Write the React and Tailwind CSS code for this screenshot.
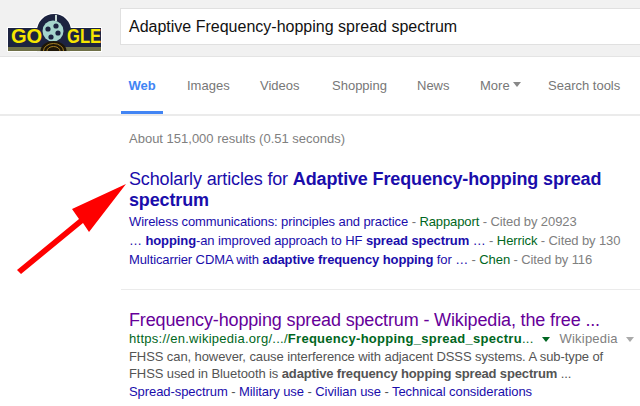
const tabs = [
  { label: 'Images', w: 'w-[73px]' },
  { label: 'Videos', w: 'w-[72px]' },
  { label: 'Shopping', w: 'w-[85px]' },
  { label: 'News', w: 'w-[63px]' },
];

function Logo() {
  return (
    <svg width="96" height="40" viewBox="0 0 96 40" className="shrink-0">
      <circle cx="47" cy="18" r="18" fill="#fff" />
      <rect x="0" y="14" width="95" height="25" fill="#fff" />
      <circle cx="47" cy="18" r="17" fill="#1c2340" />
      <rect x="1" y="15" width="93" height="20" fill="#1c2340" />
      <rect x="1" y="34" width="93" height="4" fill="#6f7048" />
      <circle cx="46" cy="18" r="10.5" fill="#a5d5cc" />
      <circle cx="41" cy="16" r="2.6" fill="#1c2340" />
      <circle cx="49" cy="13" r="2.6" fill="#1c2340" />
      <circle cx="51" cy="20" r="2.6" fill="#1c2340" />
      <circle cx="44" cy="24" r="2.6" fill="#1c2340" />
      <rect x="48" y="2" width="2" height="6" fill="#c5d8d4" />
      <ellipse cx="46.5" cy="38" rx="13" ry="10" fill="#1d1607" />
      <ellipse cx="46.5" cy="38" rx="10" ry="7.5" fill="none" stroke="#a67f22" strokeWidth="1" />
      <ellipse cx="46.5" cy="38" rx="6.5" ry="4.5" fill="none" stroke="#a67f22" strokeWidth="1" />
      <rect x="30" y="38" width="33" height="2" fill="#f1f1f1" />
      <text transform="translate(4 30) scale(1.03 1)" fill="#f6e600" fontFamily="Liberation Sans, sans-serif" fontWeight="700" fontSize="19.5">GO</text>
      <text transform="translate(60 30) scale(0.85 1)" fill="#f6e600" fontFamily="Liberation Sans, sans-serif" fontWeight="700" fontSize="19.5">GLE</text>
    </svg>
  );
}

function Caret({ color }) {
  return <span className={`inline-block w-0 h-0 border-x-[4px] border-x-transparent border-t-[5px] ${color}`} />;
}

export default function App() {
  return (
    <div className="relative w-[640px] h-[406px] overflow-hidden bg-white font-['Liberation_Sans',Arial,sans-serif]">
      <header className="h-[57px] bg-[#f1f1f1] border-b border-[#e4e4e4] flex items-start">
        <div className="pl-[7px] pt-[13px] w-[120px]">
          <Logo />
        </div>
        <div className="mt-[8px] flex-1 h-[37px] bg-white border-l border-t border-b border-[#e0e0e0] pl-[8px] flex items-center text-[16px] text-[#111]">
          Adaptive Frequency-hopping spread spectrum
        </div>
      </header>

      <nav className="h-[59px] border-b-2 border-[#ebebeb] flex pl-[121px] text-[13px] text-[#777]">
        <div className="w-[42px] h-[57px] border-b-[3px] border-[#4285f4] text-center pt-[19px] font-bold text-[#4285f4]">Web</div>
        <div className="flex pl-[24px] pt-[19px]">
          {tabs.map((t) => (
            <div key={t.label} className={t.w}>{t.label}</div>
          ))}
          <div className="w-[68px] flex items-start gap-[3px]">
            More <span className="mt-[6px] flex"><Caret color="border-t-[#888]" /></span>
          </div>
          <div>Search tools</div>
        </div>
      </nav>

      <main className="pl-[129px]">
        <div className="pt-[15px] text-[13px] leading-[16px] text-[#808080]">About 151,000 results (0.51 seconds)</div>

        <section className="mt-[21px] w-[490px] h-[121px] text-[#1a0dab]">
          <div className="text-[18px] leading-[21px] pt-[1px] tracking-[-0.14px]">
            <div>Scholarly articles for <b>Adaptive Frequency-hopping spread</b></div>
            <div><b>spectrum</b></div>
          </div>
          <div className="mt-[1px] text-[13px] leading-[19px] whitespace-nowrap tracking-[-0.1px]">
            <div>
              Wireless communications: principles and practice <span className="text-[#777]">- </span>
              <span className="text-[#006621]">Rappaport</span>
              <span className="text-[#808080]"> - Cited by 20923</span>
            </div>
            <div>
              … <b>hopping</b>-an improved approach to HF <b>spread spectrum</b> … <span className="text-[#777]">- </span>
              <span className="text-[#006621]">Herrick</span>
              <span className="text-[#808080]"> - Cited by 130</span>
            </div>
            <div>
              Multicarrier CDMA with <b>adaptive frequency hopping</b> for … <span className="text-[#777]">- </span>
              <span className="text-[#006621]">Chen</span>
              <span className="text-[#808080]"> - Cited by 116</span>
            </div>
          </div>
        </section>
      </main>

      <div className="ml-[121px] w-[519px] border-t border-[#ebebeb]" />

      <section className="pl-[129px] pt-[20px] whitespace-nowrap">
        <div className="text-[18px] leading-[21px] text-[#609] tracking-[-0.14px]">Frequency-hopping spread spectrum - Wikipedia, the free ...</div>
        <div className="flex items-center text-[13px] leading-[16px] text-[#006621]">
          <span className="tracking-[0.27px]">https://en.wikipedia.org/.../<b>Frequency-hopping_spread_spectru</b>...</span>
          <span className="ml-[8px] flex"><Caret color="border-t-[#006621]" /></span>
          <span className="ml-[10px] text-[#808080] tracking-[0.2px]">Wikipedia</span>
          <span className="ml-[8px] flex"><Caret color="border-t-[#aaa]" /></span>
        </div>
        <div className="mt-[1px] text-[13px] leading-[17px] text-[#545454]">
          <div className="tracking-[-0.09px]">FHSS can, however, cause interference with adjacent DSSS systems. A sub-type of</div>
          <div className="tracking-[-0.1px]">FHSS used in Bluetooth is <b className="tracking-[-0.15px]">adaptive frequency hopping spread spectrum</b> ...</div>
        </div>
        <div className="mt-[1px] text-[13px] leading-[17px] text-[#1a0dab] tracking-[-0.07px]">
          Spread-spectrum <span className="text-[#545454]">-</span> Military use <span className="text-[#545454]">-</span> Civilian use <span className="text-[#545454]">-</span> Technical considerations
        </div>
      </section>

      {/* red annotation arrow over the page */}
      <svg className="absolute left-0 top-0 pointer-events-none" width="640" height="406">
        <polygon points="126,184 72,209 79,219 17,270 21,274 83,223 89,232" fill="#fe0000" />
      </svg>
    </div>
  );
}
